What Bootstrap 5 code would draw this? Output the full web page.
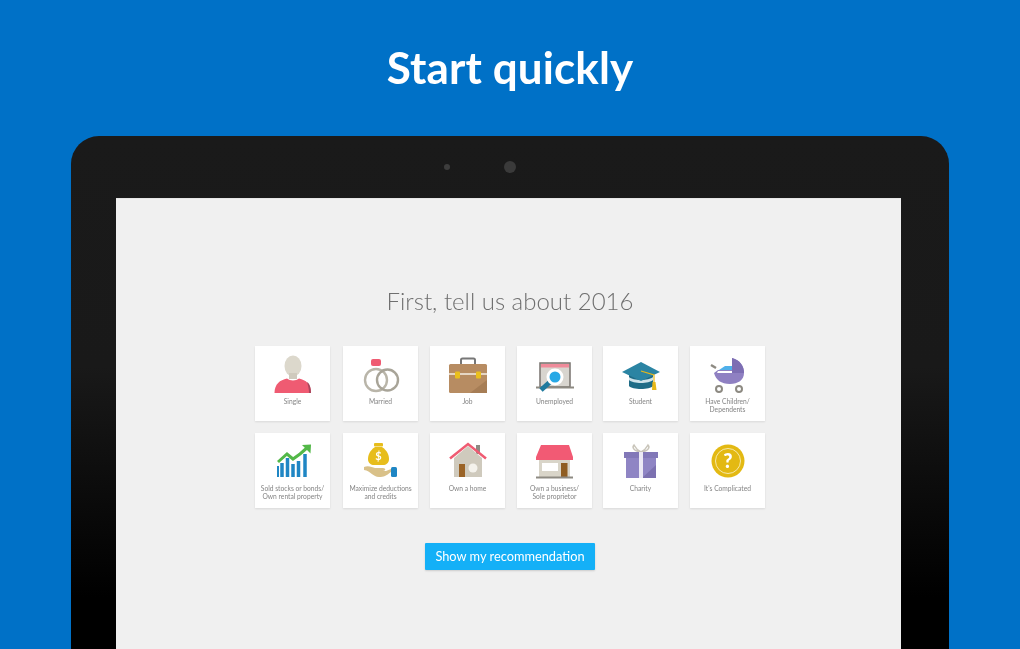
<!DOCTYPE html>
<html lang="en">
<head>
  <meta charset="UTF-8">
  <meta name="viewport" content="width=device-width, initial-scale=1.0">
  <title>Start quickly</title>
  <link href="https://cdn.jsdelivr.net/npm/bootstrap@5.3.0/dist/css/bootstrap.min.css" rel="stylesheet">
  <style>
    html, body { height: 100%; }
    body {
      background: #0071c7;
      font-family: Lato, "Liberation Sans", sans-serif;
      overflow: hidden;
    }
    .promo-title {
      color: #fff;
      font-family: Lato, "Liberation Sans", sans-serif;
      font-size: 44px;
      font-weight: 700;
      letter-spacing: .1px;
      line-height: 54px;
      height: 136px;
      padding-top: 40px;
      margin: 0;
      filter: blur(.5px);
    }
    .tablet {
      height: 513px;
      margin: 0 71px;
      padding: 0 48px 0 45px;
      border-radius: 28px 28px 0 0;
      background: linear-gradient(#1a1a1a 0, #191919 45%, #000 90%);
    }
    .camera-bar { height: 62px; padding: 0 60px 0 3px; gap: 54px; }
    .cam-small { width: 6px; height: 6px; border-radius: 50%; background: #3d3d3d; }
    .cam-big { width: 12px; height: 12px; border-radius: 50%; background: #3a3a3a; }
    .tablet-screen {
      height: 451px;
      background: #f0f0f0;
      padding: 87px 0 0 3px;
      border-top: 1px solid #e6e6e6;
    }
    .screen-title {
      color: #6f6f6f;
      font-family: Lato, "Liberation Sans", sans-serif;
      font-size: 24px;
      font-weight: 300;
      line-height: 30px;
      margin: 0 0 30px;
      filter: blur(.4px);
    }
    .tile-grid {
      display: grid;
      grid-template-columns: 88px 87px 87px 86px 87px 75px;
      row-gap: 12px;
      justify-content: center;
    }
    .tile {
      width: 75px;
      height: 75px;
      background: #fff;
      padding-top: 7px;
      box-shadow: 0 1px 2px rgba(0,0,0,.1);
      text-align: center;
    }
    .tile svg { display: block; margin: 0 auto; filter: blur(.5px); }
    .tile-label {
      color: #858585;
      font-size: 6.7px;
      line-height: 8px;
      white-space: nowrap;
      filter: blur(.4px);
    }
    .show-btn {
      width: 170px;
      height: 27px;
      margin-top: 35px;
      padding: 0;
      border: 0;
      border-radius: 1px;
      background: #14b0f7;
      color: #fff;
      font-size: 12.8px;
      line-height: 27px;
      box-shadow: 0 1px 2px rgba(0,0,0,.15);
      filter: blur(.3px);
    }
  </style>
</head>
<body>
  <h1 class="promo-title text-center">Start quickly</h1>

  <div class="tablet">
    <div class="camera-bar d-flex align-items-center justify-content-center">
      <span class="cam-small"></span>
      <span class="cam-big"></span>
    </div>

    <div class="tablet-screen text-center">
      <p class="screen-title">First, tell us about 2016</p>

      <div class="tile-grid">
        <!-- Single -->
        <div class="tile">
          <svg width="44" height="44" viewBox="0 0 44 44">
            <ellipse cx="22" cy="13" rx="8.500" ry="10.500" fill="#dcd8cc"/>
            <path d="M18 20h8v6h-8z" fill="#cfcabd"/>
            <path d="M3.500 40C3.500 31 9 27 16 25.500 19 28 25 28 28 25.500 35 27 40 31 40 40Z" fill="#ef5b72"/>
            <path d="M36 29c3 2 4 6 4 11h-2c0-4-1-8-2-11z" fill="#a9465c"/>
          </svg>
          <div class="tile-label">Single</div>
        </div>
        <!-- Married -->
        <div class="tile">
          <svg width="44" height="44" viewBox="0 0 44 44">
            <rect x="12" y="6" width="10" height="7" rx="2" fill="#ef5b72"/>
            <circle cx="17" cy="27" r="11" fill="none" stroke="#b9b5a9" stroke-width="2.400"/>
            <circle cx="28.500" cy="27" r="10.500" fill="none" stroke="#a8a498" stroke-width="2.400"/>
          </svg>
          <div class="tile-label">Married</div>
        </div>
        <!-- Job -->
        <div class="tile">
          <svg width="44" height="44" viewBox="0 0 44 44">
            <path d="M15 12V7a1.500 1.500 0 0 1 1.500-1.500h11A1.500 1.500 0 0 1 29 7v5" fill="none" stroke="#777" stroke-width="2"/>
            <rect x="3" y="11" width="38" height="29" rx="1.500" fill="#b78c62"/>
            <path d="M3 21h38" stroke="#f4efe6" stroke-width="1.500"/>
            <path d="M24 40l17-13v13z" fill="#a67d55"/>
            <rect x="9" y="18.500" width="5" height="7" rx="1" fill="#eabf1d"/>
            <rect x="30" y="18.500" width="5" height="7" rx="1" fill="#eabf1d"/>
          </svg>
          <div class="tile-label">Job</div>
        </div>
        <!-- Unemployed -->
        <div class="tile">
          <svg width="44" height="44" viewBox="0 0 44 44">
            <rect x="7" y="10" width="30" height="24" fill="#d8d5cf" stroke="#77726d" stroke-width="1.500"/>
            <rect x="8" y="11" width="28" height="3.500" fill="#ef8b9a"/>
            <path d="M3 34.500h38" stroke="#8d8a82" stroke-width="2"/>
            <path d="M8 37l9-8" stroke="#1f7a9e" stroke-width="5"/>
            <circle cx="22" cy="24" r="8.500" fill="#fff"/>
            <circle cx="22" cy="24" r="5.500" fill="#27a8e6"/>
          </svg>
          <div class="tile-label">Unemployed</div>
        </div>
        <!-- Student -->
        <div class="tile">
          <svg width="44" height="44" viewBox="0 0 44 44">
            <path d="M10 22v11c3 4 21 4 24 0V22z" fill="#1f6c87"/>
            <path d="M10 24c4 4 20 4 24 0v3c-4 4-20 4-24 0z" fill="#cfe3ea"/>
            <path d="M22 9L41 19 22 28 3 19z" fill="#2b84a3"/>
            <path d="M22 18l13 4v7" fill="none" stroke="#e8b818" stroke-width="1.200"/>
            <path d="M33.500 29h3l1 8h-4.500z" fill="#e8b818"/>
          </svg>
          <div class="tile-label">Student</div>
        </div>
        <!-- Have Children -->
        <div class="tile">
          <svg width="44" height="44" viewBox="0 0 44 44">
            <path d="M5 12l5 3" stroke="#8d8a82" stroke-width="2.500"/>
            <path d="M26 5C34 7 38 13 38 20 38 27 32 31 24 31 15 31 10 27 8 20l4-3h14z" fill="#8f80c2"/>
            <path d="M26 5C34 7 38 13 38 20H26z" fill="#7d6eb3"/>
            <path d="M13 17l6-4h7v4z" fill="#4fb0ea"/>
            <path d="M12 18h14v2H11z" fill="#fff"/>
            <circle cx="13" cy="36" r="3" fill="none" stroke="#8d8a82" stroke-width="2"/>
            <circle cx="33" cy="36" r="3" fill="none" stroke="#8d8a82" stroke-width="2"/>
          </svg>
          <div class="tile-label">Have Children/<br>Dependents</div>
        </div>

        <!-- Sold stocks -->
        <div class="tile">
          <svg width="44" height="44" viewBox="0 0 44 44">
            <path d="M11 37V23M16.500 37V18M22 37V24M27.500 37V21M34 37V14" stroke="#1f86c4" stroke-width="3.500"/>
            <path d="M7 37V26" stroke="#1f86c4" stroke-width="2"/>
            <path d="M7 22l9-8 6 5 7-5 8-7" fill="none" stroke="#53b848" stroke-width="3"/>
            <path d="M31 5l9-.5-.5 9z" fill="#53b848"/>
          </svg>
          <div class="tile-label">Sold stocks or bonds/<br>Own rental property</div>
        </div>
        <!-- Maximize deductions -->
        <div class="tile">
          <svg width="44" height="44" viewBox="0 0 44 44">
            <rect x="15" y="3" width="9" height="3.500" rx="1" fill="#e7bd1c"/>
            <path d="M16 7h7c6 4 7 9 7 12 0 4-3 6-6 6h-9c-3 0-6-2-6-6 0-3 1-8 7-12z" fill="#e7bd1c"/>
            <text x="19.500" y="20" text-anchor="middle" font-family="Lato, sans-serif" font-size="11" font-weight="700" fill="#fff">$</text>
            <path d="M5 27c4-2 8 0 11 1h8c3 0 3 3 0 3h3l5-2v3c-5 4-7 5-12 5-6 0-8-6-15-7z" fill="#d9c189"/>
            <rect x="32" y="27" width="6" height="10" rx="1.500" fill="#1f86c4"/>
          </svg>
          <div class="tile-label">Maximize deductions<br>and credits</div>
        </div>
        <!-- Own a home -->
        <div class="tile">
          <svg width="44" height="44" viewBox="0 0 44 44">
            <path d="M30 5h4v9h-4z" fill="#8d8a82"/>
            <path d="M8 18L22 6l14 12v19H8z" fill="#cfcabd"/>
            <path d="M4 18.500L22 4l18 14.500" fill="none" stroke="#ef5b72" stroke-width="2.500"/>
            <rect x="13" y="24" width="6" height="13" fill="#9a6326"/>
            <circle cx="27" cy="28" r="4.500" fill="#f4f2ec"/>
          </svg>
          <div class="tile-label">Own a home</div>
        </div>
        <!-- Own a business -->
        <div class="tile">
          <svg width="44" height="44" viewBox="0 0 44 44">
            <rect x="6" y="19" width="31" height="18" fill="#d9d5c9"/>
            <path d="M8 5h28l4 12v3H3v-3z" fill="#f25a74"/>
            <rect x="9" y="23" width="16" height="8" fill="#fff"/>
            <rect x="28" y="23" width="6.500" height="14" fill="#8f5d22"/>
            <path d="M3 37.500h37" stroke="#8d8a82" stroke-width="2"/>
          </svg>
          <div class="tile-label">Own a business/<br>Sole proprietor</div>
        </div>
        <!-- Charity -->
        <div class="tile">
          <svg width="44" height="44" viewBox="0 0 44 44">
            <path d="M22 12c-4-2-6-5-7-7-2 2-1 6 7 7 8-1 9-5 7-7-1 2-3 5-7 7z" fill="none" stroke="#c9c5ba" stroke-width="1.500"/>
            <rect x="7" y="18" width="30" height="20" fill="#8f85c4"/>
            <path d="M23 38l14-13v13z" fill="#7c71b0"/>
            <rect x="5" y="12" width="34" height="6" fill="#8278b8"/>
            <rect x="20" y="12" width="4" height="26" fill="#ece9f5"/>
          </svg>
          <div class="tile-label">Charity</div>
        </div>
        <!-- Complicated -->
        <div class="tile">
          <svg width="44" height="44" viewBox="0 0 44 44">
            <circle cx="22" cy="21" r="16.500" fill="#e3b913"/>
            <circle cx="22" cy="21" r="12.500" fill="none" stroke="#f7e9a8" stroke-width="1"/>
            <text x="22" y="28" text-anchor="middle" font-family="Lato, sans-serif" font-size="20" font-weight="900" fill="#fff">?</text>
          </svg>
          <div class="tile-label">It's Complicated</div>
        </div>
      </div>

      <button type="button" class="btn show-btn">Show my recommendation</button>
    </div>
  </div>

  <script src="https://cdn.jsdelivr.net/npm/bootstrap@5.3.0/dist/js/bootstrap.bundle.min.js"></script>
</body>
</html>
